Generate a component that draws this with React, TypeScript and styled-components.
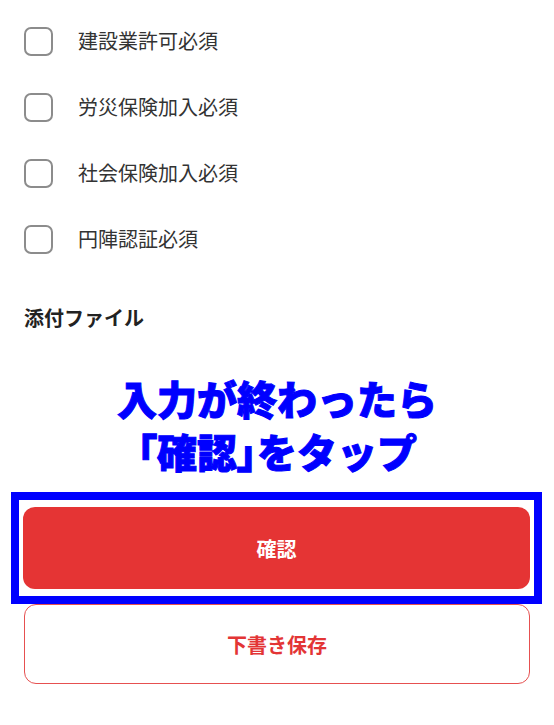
import React from 'react';
import styled, {createGlobalStyle} from 'styled-components';

const GlobalStyle = createGlobalStyle`
  body {
    margin: 0;
    background: #ffffff;
    font-family: "Noto Sans CJK JP", "Noto Sans", sans-serif;
  }
`

const Page = styled.div`
  width: 554px;
  height: 725px;
  display: flex;
  flex-direction: column;
  box-sizing: border-box;
  padding-top: 8px;
  overflow: hidden;
`

const CheckList = styled.div`
  display: flex;
  flex-direction: column;
  padding: 0 24px;
`

const CheckRow = styled.label`
  display: flex;
  align-items: center;
  gap: 25px;
  height: 66px;
`

const Box = styled.span`
  width: 29px;
  height: 29px;
  box-sizing: border-box;
  border: 2px solid #8c8c8c;
  border-radius: 7px;
  flex-shrink: 0;
`

const CheckLabel = styled.span`
  font-size: 20px;
  color: #333333;
  line-height: 28px;
`

const SectionLabel = styled.div`
  margin-top: 32px;
  padding: 0 24px;
  font-size: 20px;
  font-weight: 700;
  line-height: 28px;
  color: #222222;
`

const Annotation = styled.div`
  margin-top: 40px;
  text-align: center;
  font-size: 40px;
  line-height: 53px;
  font-weight: 900;
  color: #0000ff;
  -webkit-text-stroke: 1px #0000ff;
`

// brackets are set half-width in the reference
const Bracket = styled.span`
  font-feature-settings: "palt";
`

const Highlight = styled.div`
  margin: 14px 12px 0 11px;
  border: 8px solid #0000ff;
  padding: 7px 4px;
`

const Button = styled.button<{ outline?: boolean }>`
  display: flex;
  align-items: center;
  justify-content: center;
  width: 100%;
  box-sizing: border-box;
  border-radius: 12px;
  font-family: inherit;
  font-size: 20px;
  font-weight: 700;
  cursor: pointer;
  ${props => props.outline ? `
    height: 80px;
    background: #ffffff;
    color: #e33535;
    border: 1.5px solid #e65050;
  ` : `
    height: 82px;
    background: #e53434;
    color: #ffffff;
    border: none;
  `}
`

const SecondaryWrap = styled.div`
  padding: 0 24px;
`

const items = [
  "建設業許可必須",
  "労災保険加入必須",
  "社会保険加入必須",
  "円陣認証必須",
]

function App() {
  return (
    <>
      <GlobalStyle/>
      <Page>
        <CheckList>
          {items.map(i => (
            <CheckRow key={i}>
              <Box/>
              <CheckLabel>{i}</CheckLabel>
            </CheckRow>
          ))}
        </CheckList>
        <SectionLabel>添付ファイル</SectionLabel>
        <Annotation>
          入力が終わったら<br/><Bracket>「</Bracket>確認<Bracket>」</Bracket>をタップ
        </Annotation>
        <Highlight>
          <Button>確認</Button>
        </Highlight>
        <SecondaryWrap>
          <Button outline>下書き保存</Button>
        </SecondaryWrap>
      </Page>
    </>
  );
}

export default App;
